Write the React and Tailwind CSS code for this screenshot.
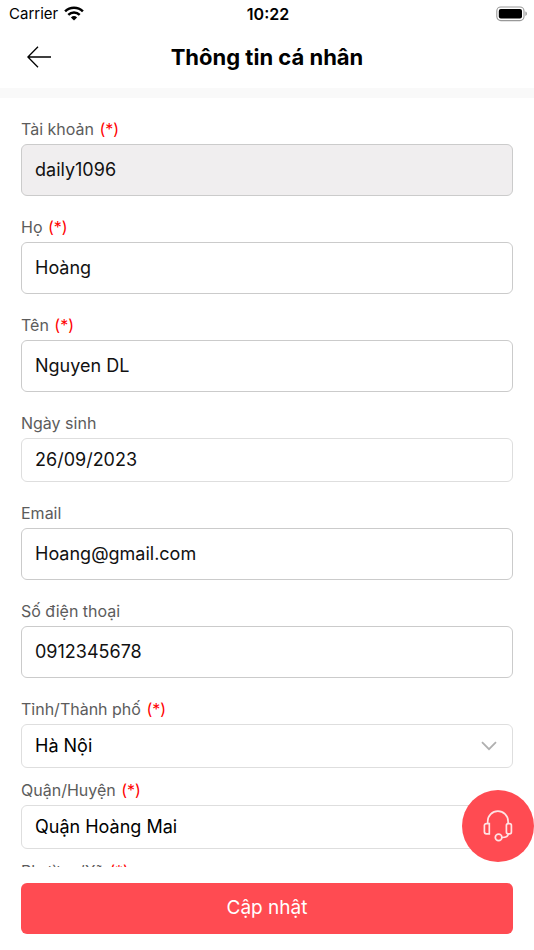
import { useState } from "react";

/* ---------------- DATA ---------------- */
const fields = [
    { id: "account", label: "Tài khoản", required: true, disabled: true },
    { id: "lastName", label: "Họ", required: true },
    { id: "firstName", label: "Tên", required: true },
    { id: "birthday", label: "Ngày sinh", compact: true },
    { id: "email", label: "Email", type: "email" },
    { id: "phone", label: "Số điện thoại", type: "tel" },
];

const regions = [
    { id: "city", label: "Tỉnh/Thành phố", options: ["Hà Nội", "Hồ Chí Minh"] },
    { id: "district", label: "Quận/Huyện", options: ["Quận Hoàng Mai", "Quận Ba Đình"] },
    { id: "ward", label: "Phường/Xã", options: ["Phường Đại Kim", "Phường Định Công"] },
];

/* ---------------- ICONS ---------------- */
function WifiIcon() {
    return (
        <svg width="20" height="16" viewBox="0 0 20 16" aria-hidden="true">
            <g fill="none" stroke="#000" strokeWidth="2.5">
                <path d="M1.1 5.3a12.8 12.8 0 0 1 17.8 0" />
                <path d="M4.3 8.8a8.2 8.2 0 0 1 11.4 0" />
            </g>
            <path d="M10 14.6l-3.1-3.2a4.5 4.5 0 0 1 6.2 0z" />
        </svg>
    );
}

function BatteryIcon() {
    return (
        <svg width="32" height="17" viewBox="0 0 32 17" aria-hidden="true">
            <rect x="1.8" y="1" width="27.2" height="13.6" rx="4" fill="none" stroke="#999" strokeWidth="1.1" />
            <rect x="3.8" y="3" width="23.2" height="9.6" rx="2" />
            <path d="M30.4 5.6c2 .6 2 3.8 0 4.4z" fill="#999" />
        </svg>
    );
}

function BackIcon() {
    return (
        <svg width="24" height="22" viewBox="0 0 24 22" fill="none" stroke="#000" strokeWidth="1.3" aria-hidden="true">
            <path d="M11 .8L.9 11 11 21.2M.9 11H24" />
        </svg>
    );
}

function ChevronIcon() {
    return (
        <svg
            className="pointer-events-none absolute right-4 top-1/2 -translate-y-1/2"
            width="16"
            height="10"
            viewBox="0 0 16 10"
            fill="none"
            stroke="#b0b0b0"
            strokeWidth="1.8"
            aria-hidden="true"
        >
            <path d="M1 1.2l7 7 7-7" />
        </svg>
    );
}

function HeadsetIcon() {
    return (
        <svg width="30" height="32" viewBox="0 0 30 32" fill="none" stroke="#ffe3e4" strokeWidth="1.7" aria-hidden="true">
            <path d="M4.7 13.4v-2a10.2 10.2 0 0 1 20.4 0v2" />
            <path d="M6.3 13.6v10.2H3.4a2 2 0 0 1-2-2v-6.200a2 2 0 0 1 2-2z" />
            <rect x="23.4" y="13.6" width="5" height="10.2" rx="1.8" />
            <path d="M25.200 23.800c0 2.400-1.800 3.700-6.300 3.700" />
            <circle cx="15.6" cy="27.4" r="3.3" />
        </svg>
    );
}

/* ---------------- FORM PARTS ---------------- */
function Label({ htmlFor, required, children }) {
    return (
        <label htmlFor={htmlFor} className="text-base leading-5 text-[#5c5c5c]">
            {children}
            {required && <span className="ml-px text-[#ff0000]"> (*)</span>}
        </label>
    );
}

function TextField({ field, value, onChange }) {
    return (
        <div className="flex flex-col gap-[5px]">
            <Label htmlFor={field.id} required={field.required}>
                {field.label}
            </Label>
            <input
                id={field.id}
                type={field.type || "text"}
                value={value}
                disabled={field.disabled}
                onChange={(e) => onChange(field.id, e.target.value)}
                className={`w-full rounded-md border px-[13px] pb-0.5 text-lg text-[#111] outline-none disabled:bg-[#f0eeef] ${
                    field.compact ? "h-11 border-[#dedede]" : "h-[52px] border-[#cbcbcb]"
                }`}
            />
        </div>
    );
}

function SelectField({ field, value, onChange }) {
    return (
        <div className="flex flex-col gap-[5px]">
            <Label htmlFor={field.id} required>
                {field.label}
            </Label>
            <div className="relative">
                <select
                    id={field.id}
                    value={value}
                    onChange={(e) => onChange(field.id, e.target.value)}
                    className="block h-11 w-full appearance-none rounded-md border border-[#dedede] bg-white px-[13px] text-lg text-black outline-none"
                >
                    {field.options.map((option) => (
                        <option key={option}>{option}</option>
                    ))}
                </select>
                <ChevronIcon />
            </div>
        </div>
    );
}

export default function App() {
    const [profile, setProfile] = useState({
        account: "daily1096",
        lastName: "Hoàng",
        firstName: "Nguyen DL",
        birthday: "26/09/2023",
        email: "Hoang@gmail.com",
        phone: "0912345678",
        city: "Hà Nội",
        district: "Quận Hoàng Mai",
        ward: "Phường Đại Kim",
    });

    const handleChange = (id, value) => setProfile((prev) => ({ ...prev, [id]: value }));

    return (
        <div className="flex h-dvh flex-col bg-white font-['Inter',sans-serif] text-black">
            {/* Status bar */}
            <div className="grid h-7 shrink-0 grid-cols-3 items-center pl-[9px] pr-[7px] text-[15px] leading-5">
                <div className="flex items-center gap-1.5">
                    Carrier
                    <WifiIcon />
                </div>
                <span className="text-center text-base font-semibold leading-5">10:22</span>
                <div className="flex justify-end">
                    <BatteryIcon />
                </div>
            </div>

            {/* Header */}
            <header className="grid h-[70px] shrink-0 grid-cols-[1fr_auto_1fr] items-center border-b-10 border-[#f9f9f9] px-[27px] pb-0.5">
                <button type="button" aria-label="Quay lại" className="justify-self-start">
                    <BackIcon />
                </button>
                <h1 className="text-[22px] font-bold leading-7">Thông tin cá nhân</h1>
            </header>

            {/* Form */}
            <form
                id="profile-form"
                onSubmit={(e) => e.preventDefault()}
                className="flex min-h-0 flex-1 flex-col gap-[21px] overflow-y-auto px-[21px] pt-[21px] [scrollbar-width:none]"
            >
                {fields.map((field) => (
                    <TextField key={field.id} field={field} value={profile[field.id]} onChange={handleChange} />
                ))}
                <div className="flex flex-col gap-3 pb-4">
                    {regions.map((field) => (
                        <SelectField key={field.id} field={field} value={profile[field.id]} onChange={handleChange} />
                    ))}
                </div>
            </form>

            {/* Submit */}
            <footer className="shrink-0 px-[21px] py-4">
                <button
                    type="submit"
                    form="profile-form"
                    className="h-[51px] w-full rounded-md bg-[#ff4b52] text-[19px] text-white"
                >
                    Cập nhật
                </button>
            </footer>

            {/* Support */}
            <button
                type="button"
                aria-label="Hỗ trợ"
                className="fixed bottom-[88px] right-0 flex size-[72px] items-center justify-center rounded-full bg-[#ff4b52]"
            >
                <HeadsetIcon />
            </button>
        </div>
    );
}
